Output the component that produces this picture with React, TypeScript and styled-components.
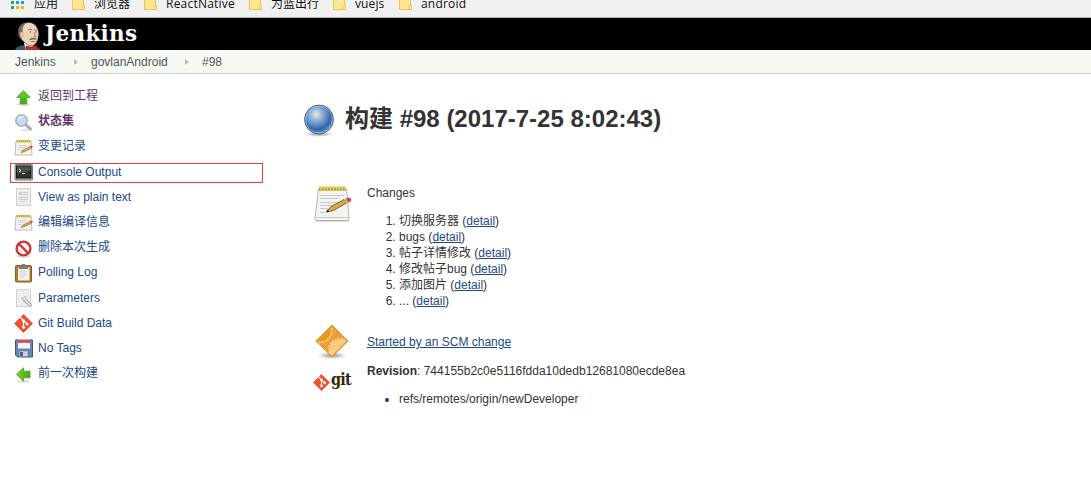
import React from 'react';
import styled, { createGlobalStyle } from 'styled-components';

const Global = createGlobalStyle`
  * { box-sizing: border-box; }
  body { margin: 0; background: #fff; color: #333; font: 12px/16px "Liberation Sans", "Noto Sans CJK SC", sans-serif; overflow: hidden; }
  svg { display: block; flex: none; overflow: visible; }
`;

const Bookmarks = styled.nav`
  height: 18px; background: #f1f1f1; border-bottom: 1px solid #b6b6b6; overflow: hidden;
  display: flex; align-items: flex-start; padding-left: 10px;
  font-family: "Open Sans", "Noto Sans CJK SC", sans-serif; color: #111;
`;
const Bookmark = styled.div<{ $w: number; $gap?: number; $track?: number }>`
  display: flex; width: ${p => p.$w}px; gap: ${p => p.$gap ?? 9}px; flex: none; white-space: nowrap;
  letter-spacing: ${p => p.$track ?? 0}px;
`;
const BookmarkText = styled.span`margin-top: -4px;`;
const Header = styled.header`
  height: 32px; background: #000; display: flex; padding-left: 15px; overflow: hidden;
`;
const Brand = styled.span`
  color: #fff; font: bold 21.5px/32px "DejaVu Serif", serif; margin-left: 5px; letter-spacing: .3px;
`;
const Crumbs = styled.div`
  height: 24px; background: #f7faf3; border-bottom: 1px solid #d3d5cf; padding-left: 15px;
  display: flex; align-items: center; color: #4d545d;
`;
const Crumb = styled.span<{ $w: number }>`width: ${p => p.$w}px;`;
const Arrow = styled.i<{ $after: number }>`
  border: 3px solid transparent; border-left: 4px solid #bbb; border-right: 0; margin-right: ${p => p.$after}px;
`;
const Page = styled.div`display: flex;`;
const Side = styled.aside`width: 303px; padding: 13px 0 0 10px;`;
const Task = styled.div<{ $boxed?: boolean; $bold?: boolean; $visited?: boolean }>`
  width: 253px; height: 20px; margin-bottom: 5.2px; padding-left: 4px; display: flex; align-items: center; gap: 5px;
  color: ${p => (p.$visited ? '#5c3566' : '#204a87')};
  font-weight: ${p => (p.$bold ? 700 : 400)};
  outline: ${p => (p.$boxed ? '1px solid #f23a3a' : 'none')}; outline-offset: -1px;
  & > svg { margin-top: -1px; }
`;
const TaskText = styled.span`margin-top: -2px;`;
const Main = styled.main`padding-top: 27px;`;
const Title = styled.h1`
  margin: 0 0 47px; display: flex; align-items: center; gap: 10px; font-size: 24px; line-height: 36px; height: 36px; white-space: nowrap;
`;
const Row = styled.section<{ $h: number }>`display: flex; height: ${p => p.$h}px;`;
const IconCell = styled.div<{ $shift?: number }>`width: 64px; padding-left: 10px; margin-top: ${p => p.$shift ?? 0}px;`;
const Body = styled.div`padding-top: 1px;`;
const Changes = styled.ol`margin: 12px 0 0; padding-left: 32px;`;
const Refs = styled.ul`margin: 12px 0 0; padding-left: 32px;`;
const Link = styled.a`color: #204a87; text-decoration: underline; text-underline-offset: 1px;`;

const Folder = () => (
  <svg width="13" height="11" viewBox="0 0 13 11">
    <path d="M.5-4H11.5V5.5H12.5V9.5H.5Z" fill="#ffe694" stroke="#eac751" />
    <path d="M10 6h2.5v3.5H10z" fill="#fff0b5" stroke="#eac14b" />
  </svg>
);
const Apps = () => (
  <svg width="14" height="10" viewBox="0 0 14 10">
    {['#20a464', '#2196f3', '#2196f3', '#20a464', '#ffb300', '#ffb300'].map((c, i) => (
      <rect key={i} x={1 + (i % 3) * 5} y={i < 3 ? 1 : 6} width="3" height="3" fill={c} />
    ))}
  </svg>
);
const Butler = () => (
  <svg width="25" height="32" viewBox="0 0 25 32">
    <path d="M0 32Q1 28.500 8 27L18 28Q25 29 25 32Z" fill="#37566a" />
    <path d="M9 25l9-1 1 9H11z" fill="#f5f5f2" />
    <path d="M4 13Q4 7 10 5Q17 3 21 8Q24 12 23.500 17Q23 26 17 28Q12 28 8 23L4.500 19Z" fill="#eed2b5" stroke="#4a3a32" strokeWidth=".5" />
    <path d="M3.500 18Q1.500 8 8 5.500L11 4.700Q7 8.500 7.500 13L7 20L4.500 19Z" fill="#6d6965" />
    <path d="M5 14.500q3.500-1.500 3 2t-2.500 3z" fill="#eed2b5" stroke="#8f7868" strokeWidth=".4" />
    <path d="M13 14q2-2 4 0q-2 1.500-4 0zM19.500 13.500q1.500-1 3 .5q-1.500 1.500-3-.5z" fill="#fff" />
    <circle cx="15.300" cy="14" r=".7" fill="#222" /><circle cx="21" cy="13.900" r=".7" fill="#222" />
    <path d="M13 12q2-1.500 4 0M19 12l3 .3M19 14.500l1.500 4-2 .5" stroke="#6b5547" strokeWidth=".7" fill="none" />
    <path d="M14 21.500q1-2 4-1.500q3-.5 4 1q-2 1-4 .3q-2 1-4 .2z" fill="#675c53" /><path d="M16 23.500h4" stroke="#8a4a40" strokeWidth=".7" />
    <path d="M11 28l5 1 6-1.500v5l-6-1-5 1.500z" fill="#d62026" stroke="#701015" strokeWidth=".5" />
  </svg>
);
const ArrowIcon = ({ left }: { left?: boolean }) => (
  <svg width="19" height="20" viewBox="0 0 19 20">
    <ellipse cx="9.5" cy="17.5" rx="7" ry="1.500" fill="#e2e2e2" />
    <path transform={left ? 'rotate(-90 9.5 10.5)' : undefined} d="M9.5 3.500L16.200 10.500H12.800V17H6.200V10.500H2.800Z" fill="url(#green)" stroke="#49a51d" strokeWidth=".8" />
  </svg>
);
const Search = () => (
  <svg width="19" height="20" viewBox="0 0 19 20">
    <ellipse cx="12" cy="18" rx="6" ry="1.500" fill="#e5e5e5" />
    <path d="M11.500 12.500l5 4.500" stroke="#aaa" strokeWidth="3" strokeLinecap="round" />
    <circle cx="7.500" cy="8.500" r="5.700" fill="#c2daf4" stroke="#b0b3b5" strokeWidth="1.600" />
    <path d="M3.500 8.500q1-5 7-4q-4 0-7 4" fill="#fff" />
  </svg>
);
const SmallNote = () => (
  <svg width="19" height="20" viewBox="0 0 19 20">
    <path d="M2 4H17L18 18H1Z" fill="#f4f4f2" stroke="#aaa" strokeWidth=".8" />
    <path d="M2.500 3H16.500V5.500H2.500Z" fill="#dfc75a" /><path d="M3 4H16.500" stroke="#a08c35" strokeDasharray="1 1" />
    <path d="M4 8.500h9M4 10.500h7M4 12.500h4" stroke="#d2d2d2" />
    <path d="M7 15.500l2-2.500 7-3.500 1.500 1.800-7 3.400z" fill="#e0a850" stroke="#76531e" strokeWidth=".5" /><path d="M15.500 9.500l2-1 1.500 1-1.500 1.700z" fill="#df5146" />
  </svg>
);
const Terminal = () => (
  <svg width="19" height="20" viewBox="0 0 19 20">
    <rect x="1" y="2.500" width="17.500" height="15.500" rx="1" fill="#b9bab5" stroke="#777" />
    <rect x="2.500" y="4" width="14.500" height="12" fill="#273629" stroke="#101610" /><path d="M3 4.500h13.500v4L3 12z" fill="#465346" />
    <path d="M5 7l2 1.500-2 1.500M8 11.500h3" stroke="#eee" fill="none" />
  </svg>
);
const Doc = ({ wrench }: { wrench?: boolean }) => (
  <svg width="19" height="20" viewBox="0 0 19 20">
    <path d="M2.500 1.500H16.500V18.500H2.500Z" fill="#eee" stroke="#d0d0d0" />
    {wrench ? (
      <><path d="M10.500 12l6 5" stroke="#999" strokeWidth="3" strokeLinecap="round" /><path d="M10.500 12l6 5" stroke="#f2f2f2" strokeWidth="1.600" strokeLinecap="round" /><path d="M7.500 10q1 3 4 2l1-1q0-2-2-3l-.5 2z" fill="#eee" stroke="#aaa" strokeWidth=".7" /></>
    ) : <><path d="M5 5h3v3H5z" fill="#ccc" /><path d="M9 5.500h5M9 7.500h5M5 10.500h9M5 12.500h9M5 14.500h6" stroke="#cdcdcd" /></>}
  </svg>
);
const Stop = () => (
  <svg width="19" height="20" viewBox="0 0 19 20">
    <ellipse cx="9.5" cy="18.500" rx="7" ry="1.200" fill="#ddd" />
    <circle cx="9.5" cy="10.500" r="6.900" fill="#f7f3f2" stroke="#cf3439" strokeWidth="2.400" /><path d="M5 6l9 9" stroke="#cf3439" strokeWidth="2.400" />
  </svg>
);
const Clipboard = () => (
  <svg width="19" height="20" viewBox="0 0 19 20">
    <rect x="1.500" y="2.500" width="16" height="16.500" rx="1" fill="#af782b" stroke="#8c5c1d" />
    <path d="M4 4.500h11.500v13H4z" fill="#f1f1ef" /><path d="M6 8h7M6 10h7M6 12h7M6 14h4" stroke="#d2d2d2" /><path d="M5 4h2l1-3h3l1 3h2v2H5z" fill="#777d77" />
  </svg>
);
const Disk = () => (
  <svg width="19" height="20" viewBox="0 0 19 20">
    <path d="M1.500 2h17v17h-15l-2-2z" fill="#6687b6" stroke="#3c5687" /><path d="M4 2.500h12v8H4z" fill="#f6f6f6" /><path d="M4 2.500h12v2.200H4z" fill="#e23331" />
    <path d="M5 13h9v5.500H5z" fill="#cdd0d2" stroke="#777" strokeWidth=".5" /><path d="M6 14h3v4H6z" fill="#486186" />
  </svg>
);
const GitMark = ({ size = 19 }: { size?: number }) => (
  <svg width={size} height={size} viewBox="0 0 19 19">
    <path d="M9.5 .5L18.500 9.5 9.5 18.500 .5 9.5Z" fill="#f05033" stroke="#f05033" strokeWidth=".9" strokeLinejoin="round" />
    <path d="M6 3L9.5 6.500V13M9.5 6.500L13 10" stroke="#fff" strokeWidth="1.200" fill="none" />
    <circle cx="9.5" cy="6.700" r="1.500" fill="#fff" /><circle cx="9.5" cy="13.300" r="1.500" fill="#fff" /><circle cx="13" cy="10" r="1.500" fill="#fff" />
  </svg>
);
const Ball = () => (
  <svg width="32" height="36" viewBox="0 0 32 36">
    <ellipse cx="16" cy="33" rx="15" ry="3" fill="url(#shade)" />
    <circle cx="16" cy="18.500" r="14.400" fill="url(#ball)" stroke="#3b659c" /><circle cx="16" cy="18.500" r="13.500" fill="none" stroke="#a9c3e3" strokeWidth=".7" />
  </svg>
);
const Notepad = () => (
  <svg width="40" height="40" viewBox="0 0 40 40">
    <path d="M3 36h33v2H3z" fill="#ddd" />
    <path d="M5.500 5H33.500L36 34Q36 36.500 34 36.500H4Q2 36.500 2 34Z" fill="#f3f3f1" stroke="#a5a5a5" strokeWidth=".8" />
    <path d="M3 33.500H35.500" stroke="#ccc" /><path d="M6 4.500H33V6.500H6Z" fill="#c3a91f" />
    <path d="M6.500 4.500H33" stroke="#94811a" strokeWidth="4" strokeDasharray="1 2" /><path d="M7.500 4H33" stroke="#e6d650" strokeWidth="3.500" strokeDasharray="1.600 1.400" />
    <path d="M7 11.500H31M7 14.500H25M7 18.500H29M7 21.500H19M7 24.500H16M7 28.500H12" stroke="#c9cbc8" />
    <path d="M13.500 28l4.500-5.500L31 15.500l2.500 3.500-13 7.500z" fill="#dda34b" stroke="#825a1c" strokeWidth=".9" /><path d="M13 28.500l1.500-3 1.800 2z" fill="#222" />
    <path d="M33 15l2-1q2.500-.5 3 1.500l-.5 1.500-2.500 1.500z" fill="#db3c38" stroke="#9e302e" strokeWidth=".5" /><path d="M31 15.500l2-1 2.300 3.700-1.800 1z" fill="#bbb" />
  </svg>
);
const Scm = () => (
  <svg width="40" height="40" viewBox="0 0 40 40">
    <ellipse cx="19" cy="33.500" rx="15" ry="4" fill="url(#shade)" />
    <path d="M19 3L35 19 19 35 3 19Z" fill="#eca039" stroke="#dc962f" strokeLinejoin="round" />
    <path d="M18.500 5L16.500 14 11 19 5 18.500Z" fill="#e39a26" /><path d="M17 32.500Q15 27 18.500 21.500Q24 15.500 33.500 19L19 33.500Z" fill="#f8cb85" />
    <path d="M19 6l-.5 6-3 5-4 3-6 .5M16.500 31l-.5-6 3.500-5.500 6-2.800 7 1.300" fill="none" stroke="#fad69b" strokeWidth="1.600" strokeDasharray="2 1" />
  </svg>
);
const GitLogo = styled.div`
  display: flex; align-items: center; gap: 1px; height: 20px;
  color: #362701; font: bold 16px/20px "DejaVu Serif Condensed", "DejaVu Serif", serif; font-stretch: condensed;
`;
const GitWord = styled.span`margin-top: -4px; letter-spacing: -.8px;`;

const tasks: { text: string; icon: React.ReactNode; visited?: boolean; bold?: boolean; boxed?: boolean }[] = [
  { text: '返回到工程', icon: <ArrowIcon />, visited: true },
  { text: '状态集', icon: <Search />, visited: true, bold: true },
  { text: '变更记录', icon: <SmallNote /> },
  { text: 'Console Output', icon: <Terminal />, boxed: true },
  { text: 'View as plain text', icon: <Doc /> },
  { text: '编辑编译信息', icon: <SmallNote /> },
  { text: '删除本次生成', icon: <Stop /> },
  { text: 'Polling Log', icon: <Clipboard /> },
  { text: 'Parameters', icon: <Doc wrench /> },
  { text: 'Git Build Data', icon: <GitMark /> },
  { text: 'No Tags', icon: <Disk /> },
  { text: '前一次构建', icon: <ArrowIcon left /> },
];
const folders = [
  { text: '浏览器', w: 72 }, { text: 'ReactNative', w: 105, track: 0.22 }, { text: '为蓝出行', w: 84 },
  { text: 'vuejs', w: 66, track: 0.1 }, { text: 'android', w: 80, track: 0.2 },
];
const commits = ['切换服务器', 'bugs', '帖子详情修改', '修改帖子bug', '添加图片', '...'];

export default function App() {
  return (
    <>
      <Global />
      <svg width="0" height="0" style={{ position: 'absolute' }}>
        <defs>
          <linearGradient id="green" x2="0" y2="1"><stop stopColor="#79cf35" /><stop offset="1" stopColor="#45a713" /></linearGradient>
          <radialGradient id="ball" cx=".4" cy=".32" r=".7"><stop stopColor="#e4eddf" /><stop offset=".35" stopColor="#86abd5" /><stop offset=".75" stopColor="#3465a4" /><stop offset="1" stopColor="#6c9bd0" /></radialGradient>
          <radialGradient id="shade"><stop stopColor="#888" /><stop offset="1" stopColor="#aaa" stopOpacity="0" /></radialGradient>
        </defs>
      </svg>
      <Bookmarks>
        <Bookmark $w={62} $gap={10}><Apps /><BookmarkText>应用</BookmarkText></Bookmark>
        {folders.map(f => <Bookmark key={f.text} $w={f.w} $track={f.track}><Folder /><BookmarkText>{f.text}</BookmarkText></Bookmark>)}
      </Bookmarks>
      <Header><Butler /><Brand>Jenkins</Brand></Header>
      <Crumbs>
        <Crumb $w={59}>Jenkins</Crumb><Arrow $after={13} />
        <Crumb $w={94}>govlanAndroid</Crumb><Arrow $after={13} />
        <span>#98</span>
      </Crumbs>
      <Page>
        <Side>
          {tasks.map(t => (
            <Task key={t.text} $boxed={t.boxed} $bold={t.bold} $visited={t.visited}>{t.icon}<TaskText>{t.text}</TaskText></Task>
          ))}
        </Side>
        <Main>
          <Title><Ball />构建 #98 (2017-7-25 8:02:43)</Title>
          <Row $h={149}>
            <IconCell><Notepad /></IconCell>
            <Body>
              Changes
              <Changes>{commits.map(c => <li key={c}>{c} (<Link>detail</Link>)</li>)}</Changes>
            </Body>
          </Row>
          <Row $h={29}>
            <IconCell $shift={-11}><Scm /></IconCell>
            <Body><Link>Started by an SCM change</Link></Body>
          </Row>
          <Row $h={50}>
            <IconCell $shift={10}><GitLogo><GitMark size={17} /><GitWord>git</GitWord></GitLogo></IconCell>
            <Body>
              <b>Revision</b>: 744155b2c0e5116fdda10dedb12681080ecde8ea
              <Refs><li>refs/remotes/origin/newDeveloper</li></Refs>
            </Body>
          </Row>
        </Main>
      </Page>
    </>
  );
}
